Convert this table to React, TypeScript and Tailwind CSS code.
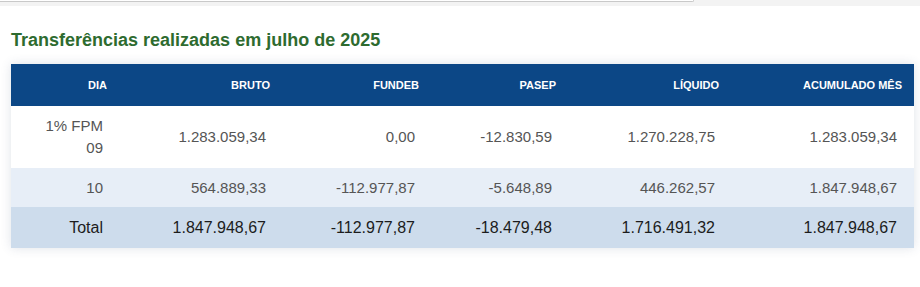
const font = { fontFamily: '"Liberation Sans", Arial, sans-serif' }

interface Row {
  dia: React.ReactNode
  values: string[]
}

const rows: Row[] = [
  { dia: "1% FPM 09", values: ["1.283.059,34", "0,00", "-12.830,59", "1.270.228,75", "1.283.059,34"] },
  { dia: "10", values: ["564.889,33", "-112.977,87", "-5.648,89", "446.262,57", "1.847.948,67"] },
]

const total = ["1.847.948,67", "-112.977,87", "-18.479,48", "1.716.491,32", "1.847.948,67"]

const headers = ["DIA", "BRUTO", "FUNDEB", "PASEP", "LÍQUIDO", "ACUMULADO MÊS"]

const grid = "grid grid-cols-[104px_163px_149px_137px_163px_187px]"

export default function App() {
  return (
    <div className="w-[920px] h-[287px] bg-white overflow-hidden" style={font}>
      <div className="h-[6px] bg-[#f3f3f3]">
        <div className="w-[694px] h-[2px] bg-white border-b border-r border-[#c9c9c9] rounded-br-[3px]" />
      </div>

      <h2 className="ml-[11px] mt-[21px] text-[18px] leading-[27px] font-bold text-[#2e6b2f]">
        Transferências realizadas em julho de 2025
      </h2>

      <div className="ml-[11px] mt-[10px] w-[903px] shadow-[0_0_10px_rgba(60,80,120,0.16)]">
        <div className={`${grid} h-[42px] bg-[#0c4786] text-white text-[11px] font-bold`}>
          {headers.map((h, i) => (
            <div
              key={h}
              className={`flex items-center justify-end ${i === 5 ? "pr-[12px]" : "pr-[8px]"}`}
            >
              {h}
            </div>
          ))}
        </div>

        {rows.map((r, idx) => (
          <div
            key={idx}
            className={`${grid} text-[15px] leading-[22px] text-[#555555] ${
              idx === 0 ? "h-[62px] bg-white" : "h-[39px] bg-[#e7eef7]"
            }`}
          >
            <div className="flex items-center justify-end pr-[12px] pl-[34px] text-right">{r.dia}</div>
            {r.values.map((v, i) => (
              <div
                key={i}
                className={`flex items-center justify-end ${i === 4 ? "pr-[17px]" : "pr-[12px]"}`}
              >
                {v}
              </div>
            ))}
          </div>
        ))}

        <div className={`${grid} h-[41px] bg-[#cddcec] text-[16px] leading-[24px] text-[#1c1c1c]`}>
          <div className="flex items-center justify-end pr-[12px]">Total</div>
          {total.map((v, i) => (
            <div
              key={i}
              className={`flex items-center justify-end ${i === 4 ? "pr-[17px]" : "pr-[12px]"}`}
            >
              {v}
            </div>
          ))}
        </div>
      </div>
    </div>
  )
}
